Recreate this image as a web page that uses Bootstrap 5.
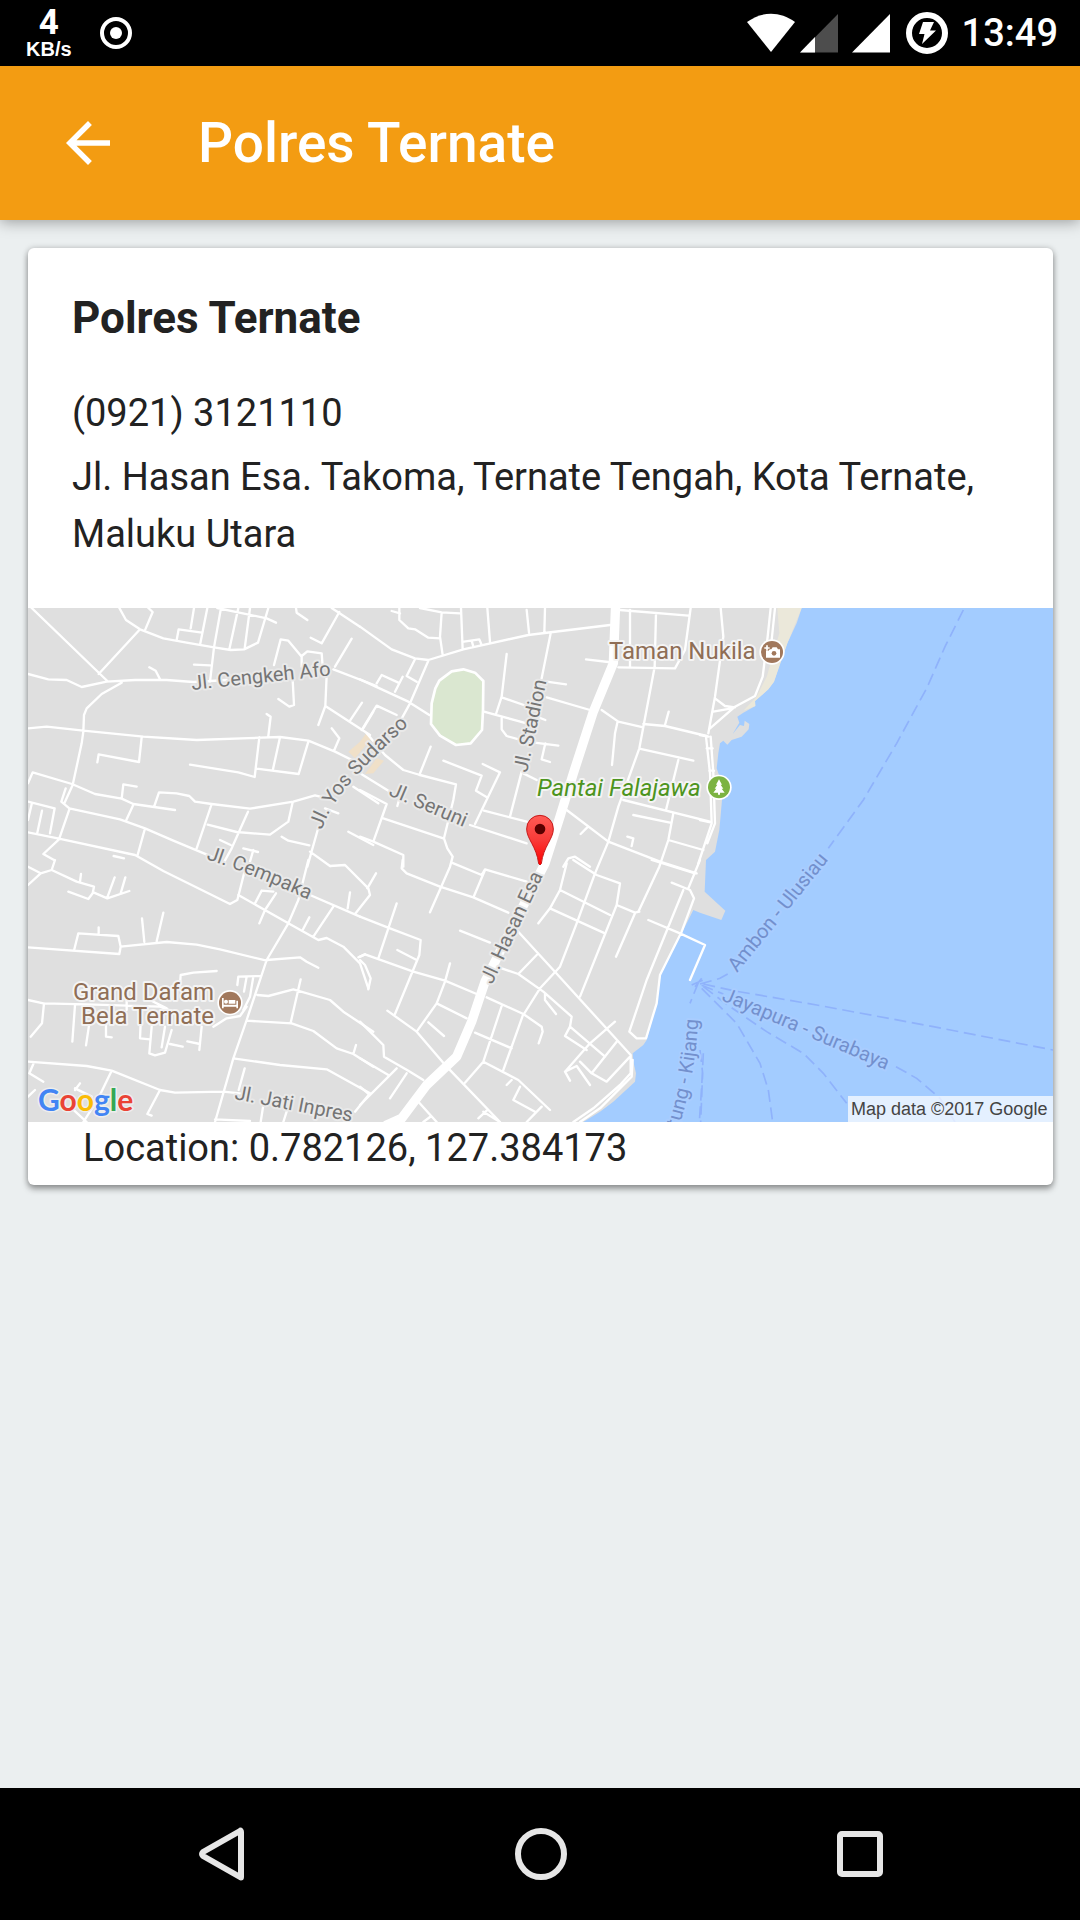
<!DOCTYPE html>
<html lang="id">
<head>
<meta charset="utf-8">
<meta name="viewport" content="width=device-width, initial-scale=1">
<title>Polres Ternate</title>
<link href="https://cdn.jsdelivr.net/npm/bootstrap@5.3.0/dist/css/bootstrap.min.css" rel="stylesheet">
<style>
  body { background: #ebeff0; color: #222; font-family: Roboto, "Noto Sans", sans-serif; font-size: 38px; line-height: 57px; }
  svg { display: block; flex-shrink: 0; }
  .status-bar { height: 66px; padding: 0 22px 0 26px; background: #000; color: #fff; }
  .net-speed { font: 700 20px/18px "Liberation Sans", Arial, sans-serif; padding-bottom: 2px; }
  .net-speed strong { font: 700 35px/34px Roboto, sans-serif; }
  .clock { font-size: 38px; font-weight: 500; margin-left: 14px; }
  .app-bar { height: 154px; padding: 0 55px; gap: 77px; background: #f39c12; box-shadow: 0 2px 14px rgba(0, 0, 0, .35); z-index: 1; }
  .app-bar h1 { font-size: 55px; line-height: 66px; font-weight: 500; }
  .place-card { margin: 28px 27px 28px 28px; border-radius: 6px; box-shadow: 0 4px 6px rgba(0, 0, 0, .35), 0 0 6px rgba(0, 0, 0, .18); }
  .place-info { padding: 40px 44px 45px; }
  .place-info h2 { font-size: 44px; line-height: 60px; font-weight: 700; margin-bottom: 37px; }
  .place-info p { margin-bottom: 7px; }
  .place-coords { padding: 0 55px 11px; line-height: 52px; }
  .nav-keys { height: 132px; padding: 0 60px 0 62px; background: #000; }
  .nav-keys .btn:hover { opacity: .8; }
  .roads { fill: none; stroke: #fff; stroke-width: 7; stroke-linejoin: round; stroke-linecap: round; }
  .ferry { fill: none; stroke: #8fb2fb; stroke-width: 5; stroke-dasharray: 36 17; }
  .lbl { font: 400 20px Roboto, sans-serif; fill: #757575; stroke: #e9e9e9; stroke-width: 4px; stroke-linejoin: round; paint-order: stroke; }
  .lbl-poi { font-size: 24px; fill: #8f6e56; stroke: #f4f4f4; }
  .lbl-park { font-size: 24px; font-style: italic; fill: #4d9420; stroke: #f4f4f4; }
  .lbl-sea { fill: #7390cd; stroke: #a9cdff; }
  .map-logo { font: 700 30px Lato, sans-serif; stroke: #eee; stroke-width: 3px; paint-order: stroke; }
  .map-credit { font: 400 18px "Liberation Sans", Arial, sans-serif; fill: #444; }
</style>
<script src="https://cdn.jsdelivr.net/npm/bootstrap@5.3.0/dist/js/bootstrap.bundle.min.js"></script>
</head>
<body class="d-flex flex-column min-vh-100">

<div class="status-bar d-flex align-items-center justify-content-between">
  <div class="d-flex align-items-center">
    <div class="net-speed d-flex flex-column align-items-center"><strong>4</strong><span>KB/s</span></div>
    <svg class="ms-4" width="40" height="40" viewBox="0 0 40 40"><circle cx="20" cy="20" r="14" fill="none" stroke="#fff" stroke-width="4"/><circle cx="20" cy="20" r="6" fill="#fff"/></svg>
  </div>
  <div class="d-flex align-items-center">
    <svg width="48" height="40" viewBox="0 0 48 40"><path d="M0 9C15-2 33-2 48 9L24 39Z" fill="#fff"/></svg>
    <svg width="57" height="40" viewBox="0 0 57 40"><path d="M5 39.500L43 1V39.500Z" fill="#4d4d4d"/><path d="M5 39.500L20 24V39.500Z" fill="#fff"/></svg>
    <svg width="54" height="40" viewBox="0 0 54 40"><path d="M0 39.500L38 1V39.500Z" fill="#fff"/></svg>
    <svg width="42" height="42" viewBox="0 0 42 42"><circle cx="21" cy="21" r="18" fill="none" stroke="#fff" stroke-width="6"/><path d="M17 10H28L24 18.500H30L16 32L18.500 22H13Z" fill="#fff"/></svg>
    <span class="clock">13:49</span>
  </div>
</div>

<header class="app-bar d-flex align-items-center position-relative text-white">
  <a href="#" aria-label="Back" class="text-white"><svg width="66" height="66" viewBox="0 0 24 24"><path d="M20 11H7.830l5.590-5.590L12 4l-8 8 8 8 1.410-1.410L7.830 13H20v-2z" fill="currentColor"/></svg></a>
  <h1 class="mb-0">Polres Ternate</h1>
</header>

<main class="flex-grow-1">
  <article class="place-card bg-white overflow-hidden">
    <div class="place-info">
      <h2>Polres Ternate</h2>
      <p>(0921) 3121110</p>
      <div>Jl. Hasan Esa. Takoma, Ternate Tengah, Kota Ternate, Maluku Utara</div>
    </div>
    <svg class="w-100 h-auto" viewBox="0 0 1025 514" role="img" aria-label="Map of Ternate">
      <defs>
        <linearGradient id="pinFill" x1="0" y1="0" x2="0" y2="1"><stop offset="0" stop-color="#ff5b55"/><stop offset=".5" stop-color="#f83a38"/><stop offset="1" stop-color="#f00"/></linearGradient>
        <path id="yosPath" d="M294 222C302 196 322 170 384 114"/>
        <path id="kijangPath" d="M651 520C661 484 669 455 671 395"/>
        <path id="cempakaPath" d="M178 251Q232 269 294 298"/>
      </defs>
      <svg width="1025" height="514" viewBox="0 0 3075 1542">
        <rect width="3075" height="1542" fill="#dfdfdf"/>
        <!-- sea, beach -->
        <g transform="translate(2016 -24)">
          <path fill="#a3ccff" d="M305 24L290 70 262 130 240 190 222 245 205 268 165 303 166 318 130 338 112 350 118 368 98 402 120 375 132 378 134 362 148 372 146 388 125 410 95 420 82 434 70 422 60 430 55 460 50 505 62 540 66 600 58 690 45 755 18 780 14 875 76 932 64 960 0 938-20 930-55 1000-120 1120-135 1230-160 1320-170 1335-202 1360-200 1385-192 1420-195 1445-260 1505-300 1535-350 1566 1059 1566 1059 24Z"/>
          <path fill="#ebe8da" d="M232 24H305L262 130 222 245 205 268 165 303 166 318 130 332 170 290 200 230 215 180 238 100Z"/>
        </g>
        <!-- ferry lines -->
        <g class="ferry">
          <path transform="translate(2016 -24)" d="M790 30L735 140 680 265 590 430 490 600 385 745"/>
          <path transform="translate(2016 756)" d="M0 372L60 355 95 335M10 372L100 392 350 435 700 500 1059 570M5 376L70 402M588 620L650 655 720 715 765 786M10 380L90 440 200 515 310 580 370 640 440 730M5 385L110 490 180 610 205 690 218 786M0 570L8 640 2 786M-5 368L-30 430M10 580L5 680-2 786M-25 375L10 360M-15 380L5 355"/>
        </g>
        <!-- built-up patches and stadium -->
        <g transform="translate(996 -24)">
          <path fill="#f0e0c8" d="M-35 455L0 425 20 398 35 415 10 445-15 475ZM15 522L35 495 50 475 72 482 40 520Z"/>
          <path fill="#dae7d0" stroke="#fff" stroke-width="8" stroke-linejoin="round" d="M310 208L345 218 370 243 369 330 366 390 332 430 288 435 240 407 213 372 215 310 226 265 238 242 275 214Z"/>
        </g>
        <g class="roads">
          <path transform="translate(-24 -24)" d="M35 24L262 243M24 222L85 238 140 240 185 261 260 245 345 240 440 240 520 246 620 240M298 24L318 60 360 88 430 115 500 128 582 142 632 150 672 148 714 128 745 24M385 24L398 36 376 88M358 90L236 222M522 24L512 85M470 120L476 88 546 98M562 24L541 130M603 24L582 142 570 245M655 24L628 148M690 24L674 146M592 24L740 55 768 68M522 194L570 196M388 202L407 212 420 238M305 248L245 282 200 325 192 345 190 395 185 430 158 555 132 612M24 385L80 380 190 392 370 410 530 420 780 411 865 422 945 455 1020 492M365 412L357 486 236 463 232 487M510 494L655 517 704 531 718 412M710 506L836 522 865 425M780 412L758 512M740 342L752 350 745 408M775 297L808 320 822 315 818 240M762 195L782 118 805 122 845 170 845 200M845 168L862 154 905 160 908 200M828 24L830 38 862 60M958 36L905 130 872 113M935 24L1020 80M995 116L945 200M940 208L1070 258M920 225L916 318 895 375M916 318L1050 405M1026 308L990 362M1060 335L1028 388M935 385L958 415 942 452M24 550L38 517 156 552 225 582 305 596 340 612 465 630M305 596L310 553 350 560M340 614L318 662M403 618L417 577 470 580 508 588 525 605 575 612 690 626 820 605 885 586 900 590M24 605L104 625 90 700M66 632L52 698M36 608L24 660M137 565L124 605 148 625 300 658 375 685 460 722 575 770M148 628L117 718 70 762 102 780M24 697L117 716 345 765 430 813 630 912 652 900 680 790M375 685L352 768M281 768L312 775M575 612L530 745M563 674L650 696 750 704 805 665 818 607M684 635L635 745 610 790M600 720L632 735M670 745L714 756M700 750L690 785M785 710L805 722 868 736M893 690L862 800M915 625L955 640M870 755L930 798M985 695L1060 735M1000 560L1075 610"/>
          <path transform="translate(996 -24)" d="M95 33L120 40M118 24V60L145 85 165 88 205 113 240 115M180 24L245 37 300 40M245 37L240 110 248 165M303 24L308 148M382 24L390 126M500 30L507 98M555 24L553 98M0 80L95 148 165 175 205 180 310 148 505 105 750 75M312 125L358 118 365 135M335 122L340 140M165 178L140 228 170 245M205 182L150 310 120 365M0 238L145 305 208 345M50 250L65 225 115 248M105 275L128 230M372 335L500 370M440 162L425 290 408 342M425 292L500 318M425 355V388L440 408 500 425 595 437M556 430L545 478 570 486M572 100L545 235M560 245L618 253M560 292L690 330M530 350L556 360M678 178L745 186M725 330L775 365 850 382M772 368L765 400 756 495M810 30V200M780 30L985 47M888 40L884 200 838 445 775 620 745 725 705 820 650 970 600 1100 540 1165M992 24L975 150 945 205 775 202M850 372L915 378 1040 408M926 335L915 375M838 446L1000 482M955 480L918 630M790 600L1050 665M820 645L930 668M940 640L925 720 898 800 835 935M925 720L1030 750M620 630L745 725 900 785 1010 820M684 680L662 702M802 710L820 715 815 738M5 390L50 317 110 345M20 400L75 465 130 510 180 525 288 553 280 600 252 715 262 745 278 770 270 800 210 937M212 440L178 525M0 520L90 575M250 482L365 527 348 572 378 590M368 492L420 517 345 672M372 632L500 665M485 515L450 650M490 520L530 540M330 675L500 730M70 655L250 715M0 570L80 612 40 725M0 710L40 725 130 765 130 800M120 590L112 618M610 800L625 775 645 770 690 800"/>
          <path transform="translate(2016 -24)" d="M62 24L70 110 45 290 25 400M212 24L203 110 188 230 165 288 105 320 30 385M225 24L215 120M45 295L75 318 105 322M40 335L95 325M0 405L25 410M18 410L30 520 35 670 10 745-5 790M32 410L40 520 45 670 22 730M0 660L35 668M20 445H38M28 512H42"/>
          <path transform="translate(-24 756)" d="M24 20L62 40 24 75M105 0L95 30 62 40M95 30L170 65 222 80 218 100 205 117 145 95M183 42L180 65M222 98L262 115 328 93M284 52L262 112M316 52L302 100M24 262L298 282 302 260 295 228 175 220 163 268M236 202V220M302 260L440 246 530 254 600 268 740 302M366 175L373 246M430 158L410 244M740 300L840 292 860 305 895 323M865 0L835 120 805 190 740 300 680 480 640 595 585 786M655 105L805 190 895 240 920 234 970 260 1020 310 1045 385M718 190L735 150 768 100M725 92L705 130M725 92L760 95M868 172L848 210M940 140L880 230M870 105L1020 170M990 97L983 145M930 18L975 15 1045 85 1050 105 1005 162M1015 292L1035 283M24 420L70 430 200 433 420 440 500 470M72 430L66 490 32 530M165 435L157 545M208 490L198 556M258 490V530L275 532M362 490L360 535 390 538M395 500L388 580 405 586 435 578 455 510M435 500L425 562M450 552L488 560M545 500L538 570M502 544L540 552M480 375L482 345 520 338 590 333M320 420V450M390 420L440 445M580 500L620 475 660 468 680 440M652 375L655 350 722 348M680 350L672 395M700 350L690 410 670 450M712 405L745 408 820 388 930 420 970 455 1060 515M842 358L812 488M680 482L815 490 880 513 950 565 1000 582 1060 620M1008 555L1000 582M640 595L780 615 920 628 1050 700 1005 755M24 605L200 618 275 632 420 690 465 698 610 695 660 700M40 612L28 640 70 665M275 632L235 715 190 786M420 690L382 762 395 767M674 625L656 690M24 710L45 690M165 690L180 670M165 685L215 710M150 740L200 786M585 778L690 783M730 735L722 786M803 745L790 786"/>
          <path transform="translate(996 756)" d="M128 0L125 25 140 40 240 80 340 112 445 158M275 8L365 45 375 28 500 65M375 30L342 108M0 170L90 205 182 240 178 285 105 462M110 130L85 205 55 295M112 270L170 300M48 40L22 85M0 290L15 283 160 335 255 362 350 402M0 300L15 315 32 355 25 388M270 310L255 365 230 430 170 515M230 430L320 475M205 487L252 528M82 452L170 515 260 620 420 786M0 485L70 555 72 590 145 632 190 660M0 595L85 645M110 625L0 735M140 640L90 715M0 680L30 705M300 212L390 248M380 412L490 462 545 500 548 515 536 550M425 438L370 605 315 668M345 518L455 565M490 462L430 630M370 605L475 660 570 750M455 660L440 675M480 680L460 720 525 755M545 740L500 786M470 210L580 330 780 550 812 585 812 640 780 675 700 745 640 786M818 600L815 650 720 745 660 786M425 325L475 342 530 285M475 342L550 395 635 470 630 500 735 590M555 400V420L588 462M630 500L615 528 680 570M765 485L690 550 615 635 630 662M615 635L650 618 690 675M660 605L695 640 770 545M695 640L740 665 808 592M620 10L600 90 570 145 535 190M600 90L750 165M570 145L730 218M640 0L710 45 780 70 770 135 660 410M770 135L825 158 838 155M825 160L768 290M540 385L490 465M875 0L1005 40M1020 0L985 85M935 68L990 90 1002 115 965 215 900 345 890 430 858 535 830 535 808 515 860 360 970 90M865 180L960 220 1035 255 990 360M175 725L230 786M370 755L420 786M380 752L355 775M190 786L210 771"/>
          <path transform="translate(996 -24)" stroke-width="28" d="M767 10L760 190 700 335 640 520 600 650 555 790 455 985 375 1145 335 1265 290 1370 200 1455 125 1555 80 1575"/>
        </g>
        <!-- points of interest -->
        <g transform="translate(2232 132)"><circle r="38" fill="#fff"/><circle r="33" fill="#a1785c"/><path fill="#fff" d="M-18-8H-2L2-14H14L18-8H24V17H-18Z"/><path d="M-15-20V-4M-23-12H-7" stroke="#a1785c" stroke-width="11"/><path d="M-15-20V-4M-23-12H-7" stroke="#fff" stroke-width="5"/><circle cx="6" cy="4" r="7" fill="#a1785c"/></g>
        <g transform="translate(2073 538)"><circle r="38" fill="#fff"/><circle r="33" fill="#7cb342"/><path fill="#fff" d="M0-24L9-8H5L13 4H8L17 16H3V22H-3V16H-17L-8 4H-13L-5-8H-9Z"/></g>
        <g transform="translate(606 1184)"><circle r="38" fill="#fff"/><circle r="33" fill="#a1785c"/><path fill="#fff" d="M-24-14H-19V6H19V-6H24V17H19V12H-19V17H-24ZM-4-8H16V3H-4Z"/><circle cx="-12" cy="-3" r="6" fill="#fff"/></g>
        <!-- pin -->
        <g transform="translate(1536 663)"><path fill="url(#pinFill)" stroke="#c61a1a" stroke-width="3" d="M0-41A40 40 0 0 1 40 0C40 30 10 52 4 104Q0 112-4 104C-10 52-40 30-40 0A40 40 0 0 1 0-41Z"/><circle r="16" fill="#590000"/></g>
      </svg>
      <text class="lbl" transform="translate(164 82) rotate(-6)">Jl. Cengkeh Afo</text>
      <text class="lbl"><textPath href="#yosPath">Jl. Yos Sudarso</textPath></text>
      <text class="lbl" transform="translate(360 187) rotate(23)">Jl. Seruni</text>
      <text class="lbl" transform="translate(499 165) rotate(-78)">Jl. Stadion</text>
      <text class="lbl"><textPath href="#cempakaPath">Jl. Cempaka</textPath></text>
      <text class="lbl" transform="translate(464 377) rotate(-65)">Jl. Hasan Esa</text>
      <text class="lbl" transform="translate(206 491) rotate(11)">Jl. Jati Inpres</text>
      <text class="lbl lbl-sea" transform="translate(709 365) rotate(-51)">Ambon - Ulusiau</text>
      <text class="lbl lbl-sea" transform="translate(693 392) rotate(23)">Jayapura - Surabaya</text>
      <text class="lbl lbl-sea"><textPath href="#kijangPath">tung - Kijang</textPath></text>
      <text class="lbl lbl-poi" x="581" y="51">Taman Nukila</text>
      <text class="lbl lbl-park" x="509" y="188">Pantai Falajawa</text>
      <text class="lbl lbl-poi" text-anchor="end" x="186" y="392">Grand Dafam</text>
      <text class="lbl lbl-poi" text-anchor="end" x="186" y="416">Bela Ternate</text>
      <text class="map-logo" x="10" y="503"><tspan fill="#4285f4">G</tspan><tspan fill="#ea4335">o</tspan><tspan fill="#fbbc05">o</tspan><tspan fill="#4285f4">g</tspan><tspan fill="#34a853">l</tspan><tspan fill="#ea4335">e</tspan></text>
      <rect x="820" y="488" width="205" height="26" fill="#fff" fill-opacity=".7"/>
      <text class="map-credit" x="823" y="507">Map data ©2017 Google</text>
    </svg>
    <div class="place-coords">Location: 0.782126, 127.384173</div>
  </article>
</main>

<nav class="nav-keys d-flex align-items-center" aria-label="System">
  <button type="button" class="btn border-0 p-0 flex-fill d-flex justify-content-center" aria-label="Back"><svg width="56" height="56" viewBox="0 0 56 56"><path d="M47 6V51Q47 52 46 51L9 30Q7 28 9 26L46 5Q47 4 47 6Z" fill="none" stroke="#e6e6e6" stroke-width="6" stroke-linejoin="round"/></svg></button>
  <button type="button" class="btn border-0 p-0 flex-fill d-flex justify-content-center" aria-label="Home"><svg width="56" height="56" viewBox="0 0 56 56"><circle cx="28" cy="28" r="23" fill="none" stroke="#e6e6e6" stroke-width="6"/></svg></button>
  <button type="button" class="btn border-0 p-0 flex-fill d-flex justify-content-center" aria-label="Recent apps"><svg width="56" height="56" viewBox="0 0 56 56"><rect x="8" y="8" width="40" height="40" rx="2" fill="none" stroke="#e6e6e6" stroke-width="6"/></svg></button>
</nav>
</body>
</html>
